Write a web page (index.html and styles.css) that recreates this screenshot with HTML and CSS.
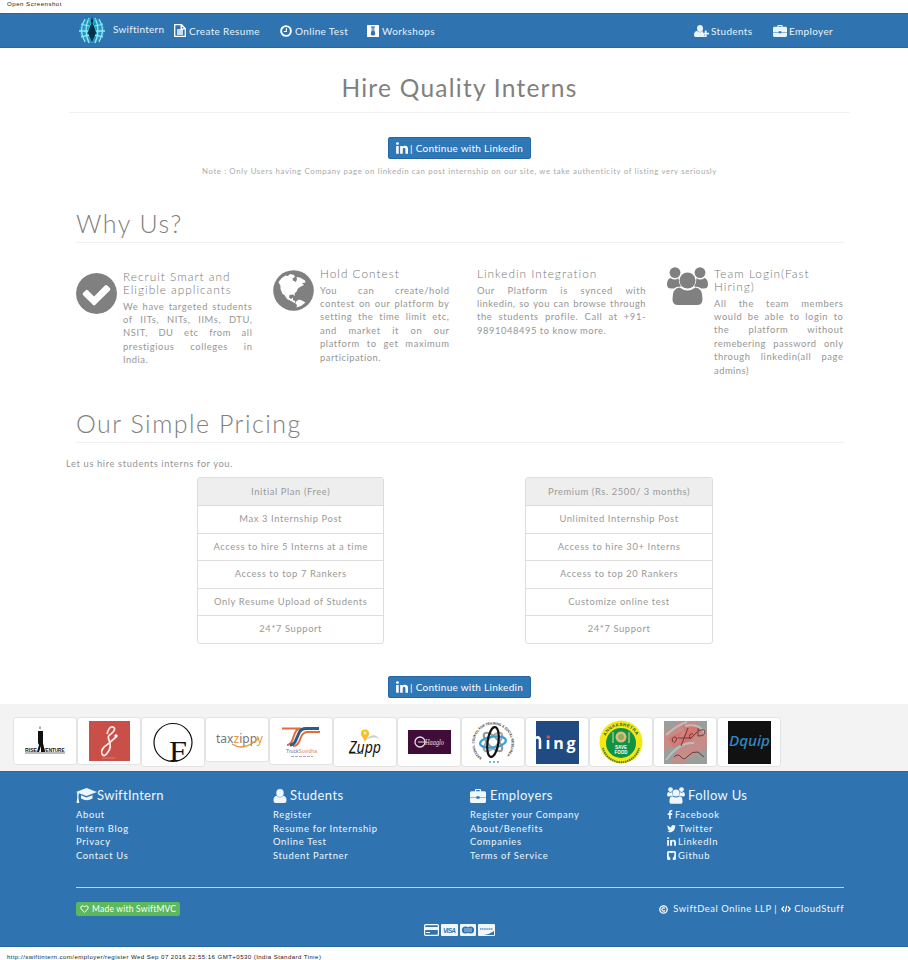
FILE: index.html
```html
<!DOCTYPE html>
<html lang="en">
<head>
<meta charset="utf-8">
<title>Swiftintern - Hire Quality Interns</title>
<link rel="stylesheet" href="styles.css">
</head>
<body>
<svg class="defs" width="0" height="0">
  <symbol id="in" viewBox="128 128 1536 1536"><path d="M477 625v991h-330v-991h330zm21-306q1 73-50.5 122t-135.5 49h-2q-82 0-132-49t-50-122q0-74 51.5-122.5t134.5-48.5 133 48.5 51 122.5zm1166 729v568h-329v-530q0-105-40.5-164.5t-126.5-59.5q-63 0-105.5 34.5t-63.5 85.5q-11 30-11 81v553h-329q2-399 2-647t-1-296l-1-48h329v144h-2q20-32 41-56t56.5-52 87-43.5 114.5-15.5q171 0 275 113.5t104 332.5z"/></symbol>
  <symbol id="group" viewBox="0 0 41 38"><circle cx="8" cy="5.6" r="5.4"/><circle cx="33" cy="5.6" r="5.4"/><path d="M3.5 11Q8 14 11.5 11Q11.500 16 14 19.500Q9 19.500 7 21.500H4Q0 21.500 0 17.500Q0 12 3.500 11ZM37.500 11Q33 14 29.500 11Q29.500 16 27 19.500Q32 19.500 34 21.500H37Q41 21.500 41 17.500Q41 12 37.500 11Z"/><circle cx="20.500" cy="13.500" r="8"/><path d="M12.500 20.500Q20.500 26.500 28.500 20.500Q35.500 21 35.500 32Q35.500 38 30 38H11Q5.500 38 5.500 32Q5.500 21 12.500 20.500Z"/></symbol>
  <symbol id="case" viewBox="0 0 16 13" preserveAspectRatio="none"><path fill-rule="evenodd" d="M5 2V1Q5 0 6 0H10Q11 0 11 1V2H14.500Q16 2 16 3.500V7.500H9.500V6.800H6.500V7.500H0V3.500Q0 2 1.500 2ZM6.200 2H9.800V1H6.200ZM0 8H6.500V9H9.500V8H16V11.500Q16 13 14.500 13H1.500Q0 13 0 11.500Z"/></symbol>
  <symbol id="user" viewBox="0 0 14 14"><ellipse cx="7" cy="4" rx="3.700" ry="4"/><path d="M3.500 6.800Q7 10 10.500 6.800Q13.500 7.200 13.500 11.500Q13.500 14 11.500 14H2.500Q.5 14 .5 11.500Q.5 7.200 3.500 6.800Z"/></symbol>
</svg>
<div class="print-head">Open Screenshot</div>
<nav class="nav">
  <a class="brand">
    <svg width="28" height="29" viewBox="0 0 28 29"><circle cx="14" cy="14.500" r="12.500" fill="#2994c4"/><g fill="none" stroke="#8eeaf2" stroke-width="1.300"><path d="M3 8Q14 12 25 8M1 15H27M3 21Q14 17 25 21M7 3Q0 14 7 26M21 3Q28 14 21 26M11 2Q5 14 11 27M17 2Q23 14 17 27"/></g><path d="M14 1L16 7L18 17L14 26L10 17L12 7Z" fill="#07304c"/><path d="M10 3L13 7L10 14M18 3L15 7L18 14" fill="none" stroke="#1fd1dc" stroke-width="1"/></svg>
    <span>Swiftintern</span>
  </a>
  <a class="n-resume"><svg width="12" height="13" viewBox="0 0 12 13"><path d="M.7.7H7.500L11.300 4.500V12.300H.7ZM7.200 1V4.800H11M3 6H9M3 8H9M3 10H9" fill="none" stroke="#fff" stroke-width="1.300"/></svg><span>Create Resume</span></a>
  <a class="n-test"><svg width="12" height="12" viewBox="0 0 12 12"><circle cx="6" cy="6" r="4.900" fill="none" stroke="#fff" stroke-width="1.900"/><path d="M6.400 3V6.500H3.800" fill="none" stroke="#fff" stroke-width="1.100"/></svg><span>Online Test</span></a>
  <a class="n-work"><svg width="12" height="12" viewBox="0 0 12 12"><rect width="12" height="12" rx=".5" fill="#fff"/><path d="M4 1.500H8V2.500H7.300V5L8.300 9Q8 10.500 6 10.500T3.700 9L4.700 5V2.500H4Z" fill="#2f74b0"/><path d="M5.400 2.500H6.600V6H5.400Z" fill="#a9c8e2"/></svg><span>Workshops</span></a>
  <a class="n-stud"><svg width="15" height="12" viewBox="0 0 15 12" fill="#fff"><ellipse cx="6" cy="3.500" rx="3" ry="3.500"/><path d="M3 6Q6 8.500 9 6V8H10V10.500H11V12H1.500Q0 12 0 10Q0 6.300 3 6ZM10.800 5.500H12.600V7.800H15V9.600H12.600V12H10.800V9.600H9V7.800H10.800Z"/></svg><span>Students</span></a>
  <a class="n-emp"><svg width="14" height="12"><use href="#case"/></svg><span>Employer</span></a>
</nav>

<header class="hero"><h1>Hire Quality Interns</h1></header>
<section class="cta">
  <a class="btn"><svg width="12" height="12"><use href="#in"/></svg><span>| Continue with Linkedin</span></a>
  <p class="note">Note : Only Users having Company page on linkedin can post internship on our site, we take authenticity of listing very seriously</p>
</section>

<section class="why">
  <h2 class="h-why">Why Us?</h2>
  <div class="features">
    <article class="feature low">
      <svg width="41" height="41" viewBox="128 128 1536 1536"><path d="M1412 734q0-28-18-46l-91-90q-19-19-45-19t-45 19l-408 407-226-226q-19-19-45-19t-45 19l-91 90q-18 18-18 46 0 27 18 45l362 362q19 19 45 19 27 0 46-19l543-543q18-18 18-45zm252 162q0 209-103 385.500t-279.500 279.500-385.500 103-385.500-103-279.500-279.500-103-385.500 103-385.500 279.500-279.500 385.500-103 385.500 103 279.500 279.500 103 385.500z"/></svg>
      <div class="txt"><h3>Recruit Smart and<br>Eligible applicants</h3>
      <p><span>We have targeted students</span><span>of IITs, NITs, IIMs, DTU,</span><span>NSIT, DU etc from all</span><span>prestigious colleges in</span><span class="last">India.</span></p></div>
    </article>
    <article class="feature">
      <svg width="41" height="41" viewBox="0 0 41 41"><circle cx="20.500" cy="20.500" r="20.300"/><g fill="#fff"><path d="M5.500 12Q8 7.500 12.500 5.500L15 6L17 4L21 5L22 7L19.500 8.500L20 10.500L23 12L24 9L23.500 7L27 7.500L32 10.500L32.500 12.500L29 13L31 15L27 17L24.500 19L24 21L21.500 23.500L22 26L20 24.500L16.500 25L16 27.500L18 29L20 27.500L20 30L22 31L22.500 33.500L18 31L14 29L11.500 25L9.500 24L7.500 19V16L6.500 14Z"/><path d="M23.500 31L26 29.500L29 30.500L32.500 32.500Q28.500 36.500 23.500 37.500L24 35L22.500 33.500Z"/></g></svg>
      <div class="txt"><h3>Hold Contest</h3>
      <p><span>You can create/hold</span><span>contest on our platform by</span><span>setting the time limit etc,</span><span>and market it on our</span><span>platform to get maximum</span><span class="last">participation.</span></p></div>
    </article>
    <article class="feature plain">
      <div class="txt"><h3>Linkedin Integration</h3>
      <p><span>Our Platform is synced with</span><span class="tight">linkedin, so you can browse through</span><span>the students profile. Call at +91-</span><span class="last">9891048495 to know more.</span></p></div>
    </article>
    <article class="feature team">
      <svg width="41" height="38"><use href="#group"/></svg>
      <div class="txt"><h3>Team Login(Fast<br>Hiring)</h3>
      <p><span>All the team members</span><span>would be able to login to</span><span>the platform without</span><span class="tight">remebering password only</span><span>through linkedin(all page</span><span class="last">admins)</span></p></div>
    </article>
  </div>
</section>

<section class="pricing">
  <h2 class="h-price">Our Simple Pricing</h2>
  <p class="lead">Let us hire students interns for you.</p>
  <div class="plans">
    <ul class="plan"><li>Initial Plan (Free)</li><li>Max 3 Internship Post</li><li>Access to hire 5 Interns at a time</li><li>Access to top 7 Rankers</li><li>Only Resume Upload of Students</li><li>24*7 Support</li></ul>
    <ul class="plan"><li>Premium (Rs. 2500/ 3 months)</li><li>Unlimited Internship Post</li><li>Access to hire 30+ Interns</li><li>Access to top 20 Rankers</li><li>Customize online test</li><li>24*7 Support</li></ul>
  </div>
  <a class="btn"><svg width="12" height="12"><use href="#in"/></svg><span>| Continue with Linkedin</span></a>
</section>

<section class="logos">
  <div class="logo h47"><svg viewBox="0 0 62 48"><path d="M24 13H29V25L31 34H27L27 28L25 34H23L25 27L24 25Z"/><path d="M26 8.500V11" stroke="#555"/><text x="11" y="33.500" font-size="6" font-weight="700" textLength="12" lengthAdjust="spacingAndGlyphs">RISE</text><text x="28.500" y="33.500" font-size="6" font-weight="700" textLength="22" lengthAdjust="spacingAndGlyphs">VENTURE</text><path d="M11 35H51" stroke="#444" stroke-width=".7"/></svg></div>
  <div class="logo h47"><svg viewBox="0 0 62 48"><rect x="11" y="3" width="41" height="40" fill="#c94f49"/><path d="M29 16Q31 8 35 9Q39 11 33 16Q29 18 31 22Q34 29 30 34Q26 40 24 36Q22 31 30 26L38 19" fill="none" stroke="#fbe9e5" stroke-width="1.700"/><circle cx="38" cy="18" r="1.700" fill="#fff"/><path d="M24 40H37" stroke="#e09a94" stroke-width=".6"/></svg></div>
  <div class="logo h50"><svg viewBox="0 0 62 48"><circle cx="31" cy="24.500" r="19" fill="none" stroke="#111" stroke-width="1.200"/><text class="serif" x="27" y="43" font-size="29" textLength="18" lengthAdjust="spacingAndGlyphs">F</text></svg></div>
  <div class="logo h45"><svg viewBox="0 0 62 48" class="noto"><text x="10" y="25" font-size="12" textLength="47" lengthAdjust="spacingAndGlyphs" fill="#777">tax<tspan fill="#e9953e">z</tspan>ipp<tspan fill="#e9953e">y</tspan></text><path d="M26 26Q38 34 53 20" fill="none" stroke="#e9953e" stroke-width="1.500"/></svg></div>
  <div class="logo h47"><svg viewBox="0 0 62 48"><path d="M12 10.500H31Q27 10.500 25 15L22 23Q20 27 17 27M50 14H38Q33 14 31 19L29 24Q27 28 23 28" fill="none" stroke="#e76b3e" stroke-width="2"/><path d="M49 10.500H36Q31 10.500 29 15L25 24Q23 27 20 27" fill="none" stroke="#295b87" stroke-width="3"/><text x="16" y="35" font-size="6" fill="#4c78be" textLength="31" lengthAdjust="spacingAndGlyphs">Truck<tspan fill="#e88561">Suvidha</tspan></text><path d="M21 38.500H43" stroke="#8896b0" stroke-width=".8" stroke-dasharray="3 1"/></svg></div>
  <div class="logo h50"><svg viewBox="0 0 62 48"><circle cx="31" cy="15.500" r="4" fill="#f5bd27"/><path d="M28 18L31 24L34 18Z" fill="#f5bd27"/><circle cx="31" cy="15" r="1.700" fill="#fbe6a5"/><path d="M33 20Q41 14 45 21Q39 17 32 22" fill="#ccc"/><text class="noto" x="15" y="35" font-size="15.500" font-style="italic" textLength="32" lengthAdjust="spacingAndGlyphs">Zupp</text><path d="M15 35.500H29" stroke="#777"/></svg></div>
  <div class="logo h50"><svg viewBox="0 0 62 48"><rect x="10" y="12" width="43" height="24" fill="#3f0d38"/><circle cx="22" cy="24" r="5" fill="none" stroke="#eadde9" stroke-width="1.300"/><path d="M20 24H28" stroke="#eadde9"/><text class="serif" x="27" y="27" font-size="8.500" fill="#eadde9" font-style="italic" textLength="19" lengthAdjust="spacingAndGlyphs">Haaglo</text></svg></div>
  <div class="logo h50"><svg viewBox="0 0 62 48"><g fill="none" stroke-width="2.200"><ellipse cx="31" cy="24" rx="5" ry="12" stroke="#999" transform="rotate(-45 31 24)"/><ellipse cx="31" cy="24" rx="5" ry="12" stroke="#aaa" transform="rotate(45 31 24)"/><ellipse cx="31" cy="24" rx="13" ry="5.500" stroke="#3aa1d8" transform="rotate(-8 31 24)"/><ellipse cx="31" cy="24" rx="5.500" ry="15" stroke="#111" transform="rotate(8 31 24)"/></g><path id="ringpath" d="M20 40A18.500 18.500 0 1 1 42 40" fill="none"/><text font-size="3.600" font-weight="700" fill="#333"><textPath href="#ringpath" textLength="88" lengthAdjust="spacingAndGlyphs">NATIONAL COUNCIL FOR TRAINING &amp; SOCIAL RESEARCH</textPath></text><path d="M27 44H37" stroke="#42a6c6" stroke-width="1.500" stroke-dasharray="2 2"/></svg></div>
  <div class="logo h50"><svg viewBox="0 0 62 48"><rect x="10" y="3" width="43" height="43" fill="#1f4a82"/><path d="M10 20Q14 18 14 23V31" fill="none" stroke="#fff" stroke-width="2.600"/><text class="open" x="19.500" y="31" font-size="16" font-weight="700" fill="#fff" textLength="30">ıng</text><circle cx="22.300" cy="19" r="1.800" fill="#d64e4a"/></svg></div>
  <div class="logo h50"><svg viewBox="0 0 62 48"><circle cx="31" cy="24" r="21.500" fill="#f4e814"/><circle cx="31" cy="25" r="15" fill="#119344"/><circle cx="31" cy="19" r="5.500" fill="#e2ba78"/><circle cx="31" cy="19" r="3" fill="#8eae68"/><path d="M23 14V25M39 14V25" stroke="#d9dfad"/><text x="25" y="31" font-size="4.500" font-weight="700" fill="#fff" textLength="12">SAVE</text><text x="24.500" y="36" font-size="4.500" font-weight="700" fill="#fff" textLength="13">FOOD</text><path id="saveTop" d="M15.500 18A17 17 0 0 1 46.500 18" fill="none"/><text font-size="4.500" font-weight="700" fill="#28633a"><textPath href="#saveTop" textLength="38">ANNAKSHETRA</textPath></text><path d="M13 30A18.500 18.500 0 0 0 49 30" fill="none" stroke="#4b7b37" stroke-width="2" stroke-dasharray="1.500 .7"/></svg></div>
  <div class="logo h50"><svg viewBox="0 0 62 48"><rect x="10" y="3" width="43" height="43" fill="#c68c88"/><path d="M10 3H24L19 9L10 13ZM10 34L29 20L17 45H10ZM43 3H53V16L43 12ZM33 40L53 30V46H30Z" fill="#9b9f9c"/><path d="M28 6L49 10L38 22L20 29L31 15ZM14 20L29 13L19 30Z" fill="#d9746e"/><path d="M12 42Q25 24 40 25M31 8Q45 5 51 15M12 17Q23 7 33 4" stroke="#b9c0bc" stroke-width="2" fill="none"/><path d="M19 24Q17 19 21 19Q25 20 20 25M27 28L34 10M24 20H37M39 16Q34 15 36 21L43 14M44 10V18M44 13Q51 10 51 14Q51 18 44 18M20 39Q24 35 27 39T34 38T44 34L50 39" fill="none" stroke="#633e3e" stroke-width="1"/></svg></div>
  <div class="logo h50"><svg viewBox="0 0 62 48"><rect x="10" y="3" width="43" height="43"/><text class="noto" x="11" y="28" font-size="14" font-style="italic" font-weight="500" fill="#3288c2" textLength="41" lengthAdjust="spacingAndGlyphs">Dquip</text></svg></div>
</section>

<footer class="footer">
  <div class="cols">
    <div><h4><svg width="21" height="15" viewBox="0 0 21 15"><path d="M10.500 0L21 4L10.500 8L3 5.200L2.500 8V10L3.300 15H.5L1.200 10V4.500L0 4ZM5 7.300L10.500 9.500L16.500 7.300V10.500Q10.500 14 5 10.500Z"/></svg><span>SwiftIntern</span></h4><a>About</a><a>Intern Blog</a><a>Privacy</a><a>Contact Us</a></div>
    <div><h4><svg width="14" height="14"><use href="#user"/></svg><span class="g3">Students</span></h4><a>Register</a><a>Resume for Internship</a><a>Online Test</a><a>Student Partner</a></div>
    <div><h4><svg width="16" height="14"><use href="#case"/></svg><span class="g4">Employers</span></h4><a>Register your Company</a><a>About/Benefits</a><a>Companies</a><a>Terms of Service</a></div>
    <div><h4><svg width="18" height="17"><use href="#group"/></svg><span class="g3">Follow Us</span></h4>
      <a><svg width="6" height="9" viewBox="470 0 880 1664"><path d="M1343 12v264h-157q-86 0-116 36t-30 108v189h293l-39 296h-254v759h-306v-759h-255v-296h255v-218q0-186 104-288.500t277-102.500q147 0 228 12z"/></svg><span class="s2">Facebook</span></a>
      <a><svg width="9" height="9" viewBox="100 200 1600 1350"><path d="M1684 408q-67 98-162 167 1 14 1 42 0 130-38 259.500t-115.500 248.500-184.500 210.500-258 146-323 54.500q-271 0-496-145 35 4 78 4 225 0 401-138-105-2-188-64.500t-114-159.500q33 5 61 5 43 0 85-11-112-23-185.500-111.500t-73.500-205.500v-4q68 38 146 41-66-44-105-115t-39-154q0-88 44-163 121 149 294.500 238.500t371.500 99.500q-8-38-8-74 0-134 94.500-228.500t228.500-94.500q140 0 236 102 109-21 205-78-37 115-142 178 93-10 186-50z"/></svg><span class="s3">Twitter</span></a>
      <a><svg width="9" height="9"><use href="#in"/></svg><span class="s2">LinkedIn</span></a>
      <a><svg width="9" height="9" viewBox="0 0 9 9"><path fill-rule="evenodd" d="M1.500 0H7.500Q9 0 9 1.500V7.500Q9 9 7.500 9H5.800V6.500Q7.500 6 7.300 4Q7.600 2.500 7 1.600L5.600 2.100H3.500L2.100 1.600Q1.500 2.500 1.800 4Q1.700 6 3.300 6.500V9H1.500Q0 9 0 7.500V1.500Q0 0 1.500 0Z"/></svg><span class="s2">Github</span></a></div>
  </div>
  <div class="credits">
    <span class="badge"><svg width="9" height="8" viewBox="0 0 9 8"><path d="M4.500 7.200L1 3.800Q0 1 2.500.8Q3.800.8 4.500 2Q5.200.8 6.500.8Q9 1 8 3.800Z" fill="none" stroke="#fff"/></svg><span>Made with SwiftMVC</span></span>
    <span class="copy"><svg width="9" height="9" viewBox="0 0 9 9"><circle cx="4.500" cy="4.500" r="3.700" fill="none" stroke="#fff" stroke-width="1.300"/><path d="M6 3.500Q4.500 2.200 3.300 3.600T4 6Q5.300 6.500 6 5.400" fill="none" stroke="#fff" stroke-width="1.100"/></svg><span class="c1">SwiftDeal Online LLP |</span><svg width="10" height="8" viewBox="0 0 10 8"><path d="M3 1.500L.8 4L3 6.500M7 1.500L9.200 4L7 6.500M5.700.8L4.300 7.200" fill="none" stroke="#fff" stroke-width="1.200"/></svg><span class="c2">CloudStuff</span></span>
  </div>
  <div class="cards">
    <svg width="15" height="12" viewBox="0 0 15 12"><rect x=".6" y=".6" width="13.800" height="10.800" rx="1" fill="none" stroke="#fff" stroke-width="1.200"/><path d="M1 3H14V6H1ZM2 8H6V9H2Z"/></svg>
    <svg width="17" height="12" viewBox="0 0 17 12"><rect width="17" height="12" rx="1"/><text x="2" y="8.500" font-size="6.500" font-weight="700" font-style="italic" textLength="13" class="blue">VISA</text></svg>
    <svg width="16" height="12" viewBox="0 0 16 12"><rect width="16" height="12" rx="1"/><g class="blue"><circle cx="5.500" cy="6" r="3.600"/><circle cx="10.500" cy="6" r="3.600"/></g><path d="M4 5H12M4 7H12" stroke="#fff" stroke-width=".6"/></svg>
    <svg width="17" height="12" viewBox="0 0 17 12"><rect width="17" height="12" rx="1"/><path class="blue" d="M16 7V11H6Q12 10 16 7Z"/><path d="M2 5H15" stroke="#5d91c0" stroke-width="1.500" stroke-dasharray="1.500 .6"/></svg>
  </div>
</footer>
<div class="print-foot">http://swiftintern.com/employer/register Wed Sep 07 2016 22:55:16 GMT+0530 (India Standard Time)</div>
</body>
</html>
```
FILE: styles.css
```css
* { box-sizing: border-box; }
body { margin: 0; width: 908px; height: 960px; overflow: hidden; background: #fff; color: #808080; font: 9.4px/13.4px Lato, "Liberation Sans", sans-serif; letter-spacing: .6px; }
h1, h2, h3, h4, p, ul { margin: 0; padding: 0; font-weight: 300; }
svg { flex: none; display: block; fill: currentColor; }
.defs { position: absolute; }
.print-head { height: 13px; padding-left: 7px; font: 6.1px/7px "Liberation Sans", sans-serif; letter-spacing: .5px; color: #222; }

.nav { height: 35px; background: #2f74b0; border-top: 1px solid #2868a2; border-bottom: 1px solid #2868a2; display: flex; align-items: center; padding-left: 78px; color: #e9f3fb; font-size: 10px; letter-spacing: .35px; white-space: nowrap; }
.nav a { flex: none; display: flex; align-items: center; gap: 3px; }
.nav a span { padding-top: 2px; }
.nav .brand { width: 96px; gap: 7px; }
.nav .brand span { margin-top: -3px; letter-spacing: .25px; }
.n-resume { width: 106px; }
.n-test { width: 87px; }
.n-work { width: 327px; }
.n-stud { width: 79px; }
.nav .n-stud, .nav .n-emp { gap: 2px; }

.hero { height: 65px; margin: 0 58px 0 69px; border-bottom: 1px solid #f0f0f0; text-align: center; }
.hero h1 { font-size: 24.5px; font-weight: 400; line-height: 80px; letter-spacing: 1.25px; }
.cta { padding: 24px 0 0 11px; height: 90px; display: flex; flex-direction: column; align-items: center; }
.btn { display: flex; align-items: center; gap: 2px; width: 143px; height: 22px; padding-left: 7px; border: 1px solid #2868a2; border-radius: 2px; background: #2f78b8; color: #fff; font-size: 10px; letter-spacing: .28px; white-space: nowrap; }
.btn span { padding-top: 1px; }
.note { margin-top: 6px; font-size: 7.8px; font-weight: 400; letter-spacing: .62px; color: #aaa; white-space: nowrap; }

.why { height: 200px; margin: 0 64px 0 76px; }
h2 { height: 40px; border-bottom: 1px solid #f0f0f0; font-size: 25px; line-height: 40px; letter-spacing: 1.5px; }
.features { display: flex; }
.feature { flex: none; width: 197px; padding-top: 24px; display: flex; gap: 6px; }
.feature > svg { margin-top: 3px; color: #808080; }
.feature.low { padding-top: 27px; }
.feature.plain { padding-left: 7px; }
.feature.team > svg { margin-top: 0; }
.txt { width: 129.500px; }
.plain .txt { width: 169px; }
h3 { font-size: 11.800px; line-height: 13px; letter-spacing: 1px; margin-bottom: 3.500px; white-space: nowrap; color: #777; }
.txt p span { display: block; white-space: nowrap; text-align-last: justify; }
.txt p span.last { text-align-last: left; letter-spacing: .5px; }
.plain .txt p span.last { letter-spacing: .55px; }
.txt p span.tight { letter-spacing: .5px; }
.txt p { color: #969696; font-weight: 400; }

.pricing { height: 301px; margin: 0 64px 0 76px; }
.lead { margin: 14px 0 6.600px -10px; font-weight: 400; color: #959595; }
.plans { display: flex; gap: 141px; margin-left: 121px; }
.plan { width: 187.400px; list-style: none; border: 1px solid #ddd; border-radius: 3px; text-align: center; letter-spacing: .6px; }
.plan li { height: 27.600px; line-height: 26px; border-top: 1px solid #ddd; color: #999; font-weight: 400; }
.plan li:first-child { height: 27px; line-height: 27px; background: #eee; border-top: 0; }
.pricing .btn { margin: 32px 0 0 312px; }

.logos { height: 67px; background: #f3f3f3; padding: 13px 0 0 13px; display: flex; }
.logo { flex: none; width: 64px; background: #fff; border: 1px solid #e3e3e3; border-radius: 3px; overflow: hidden; }
.logo > svg { width: 62px; height: 48px; fill: #111; }
.logo text, .cards text { font-family: "Liberation Sans", sans-serif; letter-spacing: 0; }
.logo .serif { font-family: "Liberation Serif", serif; }
.logo .noto, .logo .noto text { font-family: "Noto Sans", sans-serif; }
.logo .open { font-family: "Open Sans", sans-serif; }
.h45 { height: 45px; }
.h47 { height: 48px; }
.h50 { height: 50px; }

.footer { height: 176px; background: #2f74b0; border-top: 1px solid #2868a2; border-bottom: 1px solid #2868a2; padding: 15px 64px 0 76px; color: #f0f7fc; }
.cols { display: flex; height: 101px; border-bottom: 1px solid #b6d6ef; }
.cols > div { flex: none; width: 197px; }
h4 { display: flex; align-items: center; height: 17px; margin-bottom: 4px; font-size: 13px; font-weight: 400; letter-spacing: .3px; white-space: nowrap; }
.cols > div:nth-child(n+2) h4 { letter-spacing: .4px; }
.cols a { display: flex; align-items: center; height: 13.500px; white-space: nowrap; letter-spacing: .68px; }
.g3, .s3 { margin-left: 3px; }
.g4 { margin-left: 4px; }
.s2 { margin-left: 2px; }
.credits { display: flex; justify-content: space-between; padding-top: 14px; }
.badge { display: flex; align-items: center; gap: 3px; width: 104px; height: 14px; padding-left: 4px; border-radius: 2px; background: #5cb85c; color: #fff; font-size: 8.500px; letter-spacing: .22px; white-space: nowrap; }
.badge span { padding-top: 1px; }
.copy { display: flex; align-items: center; height: 14px; letter-spacing: .55px; white-space: nowrap; }
.c1 { margin: 0 4px 0 5px; }
.c2 { margin-left: 3px; }
.cards { display: flex; gap: 2px; margin: 8px 0 0 348px; }
.blue { fill: #2f74b0; }
.print-foot { padding-left: 7px; font: 6.1px/19px "Liberation Sans", sans-serif; letter-spacing: .43px; color: #222; white-space: nowrap; }
```
